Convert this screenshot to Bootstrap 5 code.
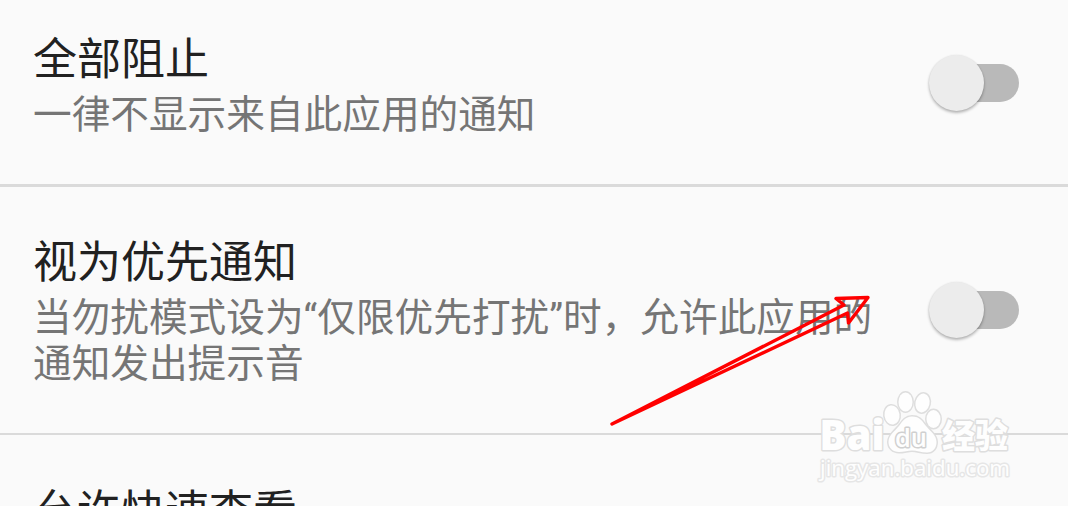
<!DOCTYPE html>
<html lang="zh-CN">
<head>
    <meta charset="UTF-8">
    <meta name="viewport" content="width=device-width, initial-scale=1.0">
    <title>应用通知</title>
    <link href="https://cdn.jsdelivr.net/npm/bootstrap@5.3.0/dist/css/bootstrap.min.css" rel="stylesheet">
    <style>
        body {
            background: #fafafa;
            font-family: Roboto, "Noto Sans CJK SC", sans-serif;
        }

        .settings-page {
            height: 506px;
        }

        .setting-row {
            padding: 0 49px 0 33px;
            border-bottom: 2px solid #dadada;
        }

        .row-block {
            height: 187px;
            padding-top: 34px;
            border-bottom-width: 3px;
        }

        .row-priority {
            height: 248px;
            padding-top: 50px;
        }

        .row-peek {
            height: 120px;
            padding-top: 51px;
        }

        .setting-title {
            font-size: 44px;
            line-height: 52px;
            color: #212121;
        }

        .setting-desc {
            font-size: 38.67px;
            line-height: 45.5px;
            color: #757575;
            width: 850px;
            margin-top: 6px;
        }

        .toggle {
            width: 90px;
            height: 56px;
        }

        .row-block .toggle {
            margin-top: 21px;
        }

        .row-priority .toggle {
            margin-top: 45px;
        }

        .toggle-track {
            width: 76px;
            height: 38px;
            background: #b9b9b9;
        }

        .toggle-thumb {
            width: 55px;
            height: 56px;
            background: #ececec;
            box-shadow: 0 2px 3px rgba(0, 0, 0, .28), 0 0 2px rgba(0, 0, 0, .08);
        }

        .arrow {
            left: 600px;
            top: 285px;
        }

        .watermark {
            left: 810px;
            top: 382px;
        }
    </style>
</head>
<body>
    <main class="settings-page position-relative overflow-hidden">
        <!-- Block all -->
        <div class="setting-row row-block d-flex justify-content-between align-items-start">
            <div>
                <div class="setting-title">全部阻止</div>
                <div class="setting-desc">一律不显示来自此应用的通知</div>
            </div>
            <div class="toggle position-relative d-flex align-items-center justify-content-end" role="switch" aria-checked="false">
                <div class="toggle-track rounded-pill"></div>
                <div class="toggle-thumb rounded-circle position-absolute top-0 start-0"></div>
            </div>
        </div>

        <!-- Priority -->
        <div class="setting-row row-priority d-flex justify-content-between align-items-start">
            <div>
                <div class="setting-title">视为优先通知</div>
                <div class="setting-desc">当勿扰模式设为“仅限优先打扰”时，允许此应用的通知发出提示音</div>
            </div>
            <div class="toggle position-relative d-flex align-items-center justify-content-end" role="switch" aria-checked="false">
                <div class="toggle-track rounded-pill"></div>
                <div class="toggle-thumb rounded-circle position-absolute top-0 start-0"></div>
            </div>
        </div>

        <!-- Peeking -->
        <div class="setting-row row-peek">
            <div class="setting-title">允许快速查看</div>
        </div>

        <svg class="arrow position-absolute" width="280" height="150" viewBox="600 285 280 150" fill="none" stroke="#ff0000" stroke-width="3.4" stroke-linejoin="round">
            <path d="M612 424 L844 305 L836 298.500 L868 297.500 L848.500 323 L847.500 313 Z"/>
        </svg>

        <svg class="watermark position-absolute" width="220" height="110" viewBox="810 382 220 110">
            <g fill="#fefefe" stroke="#dedede" stroke-width="3" paint-order="stroke" stroke-linejoin="round">
                <ellipse cx="892" cy="415" rx="7.5" ry="9.5" transform="rotate(-8 892 415)"/>
                <ellipse cx="905.5" cy="402" rx="7" ry="9.5"/>
                <ellipse cx="922.5" cy="403" rx="7" ry="9.5" transform="rotate(12 922.5 403)"/>
                <ellipse cx="933.5" cy="419" rx="7" ry="9"/>
                <path d="M912 416.500C905 416.500 902 422 899 426C895 431 888.500 435 888.500 442C888.500 448 893 452 899 452C904 452 908 450.500 912 450.500C917 450.500 921 452.500 927 452.500C933 452.500 936.500 448 936.500 442C936.500 435 930 431 926 426C922 421 920 416.500 912 416.500Z"/>
                <text x="819.5" y="450" font-size="42" font-family="Open Sans, sans-serif" font-weight="800" textLength="65" lengthAdjust="spacingAndGlyphs">Bai</text>
                <text x="895" y="447" font-size="25" font-family="Open Sans, sans-serif" font-weight="600" stroke="#d0d0d0" textLength="32" lengthAdjust="spacingAndGlyphs">du</text>
                <text x="942" y="448" font-size="33" font-weight="900" font-family="Noto Sans CJK SC, sans-serif" textLength="66" lengthAdjust="spacingAndGlyphs">经验</text>
                <text x="820" y="476" font-size="22" stroke="#e6e6e6" font-family="Open Sans, sans-serif" textLength="190" lengthAdjust="spacingAndGlyphs">jingyan.baidu.com</text>
            </g>
        </svg>
    </main>
    <script src="https://cdn.jsdelivr.net/npm/bootstrap@5.3.0/dist/js/bootstrap.bundle.min.js"></script>
</body>
</html>
